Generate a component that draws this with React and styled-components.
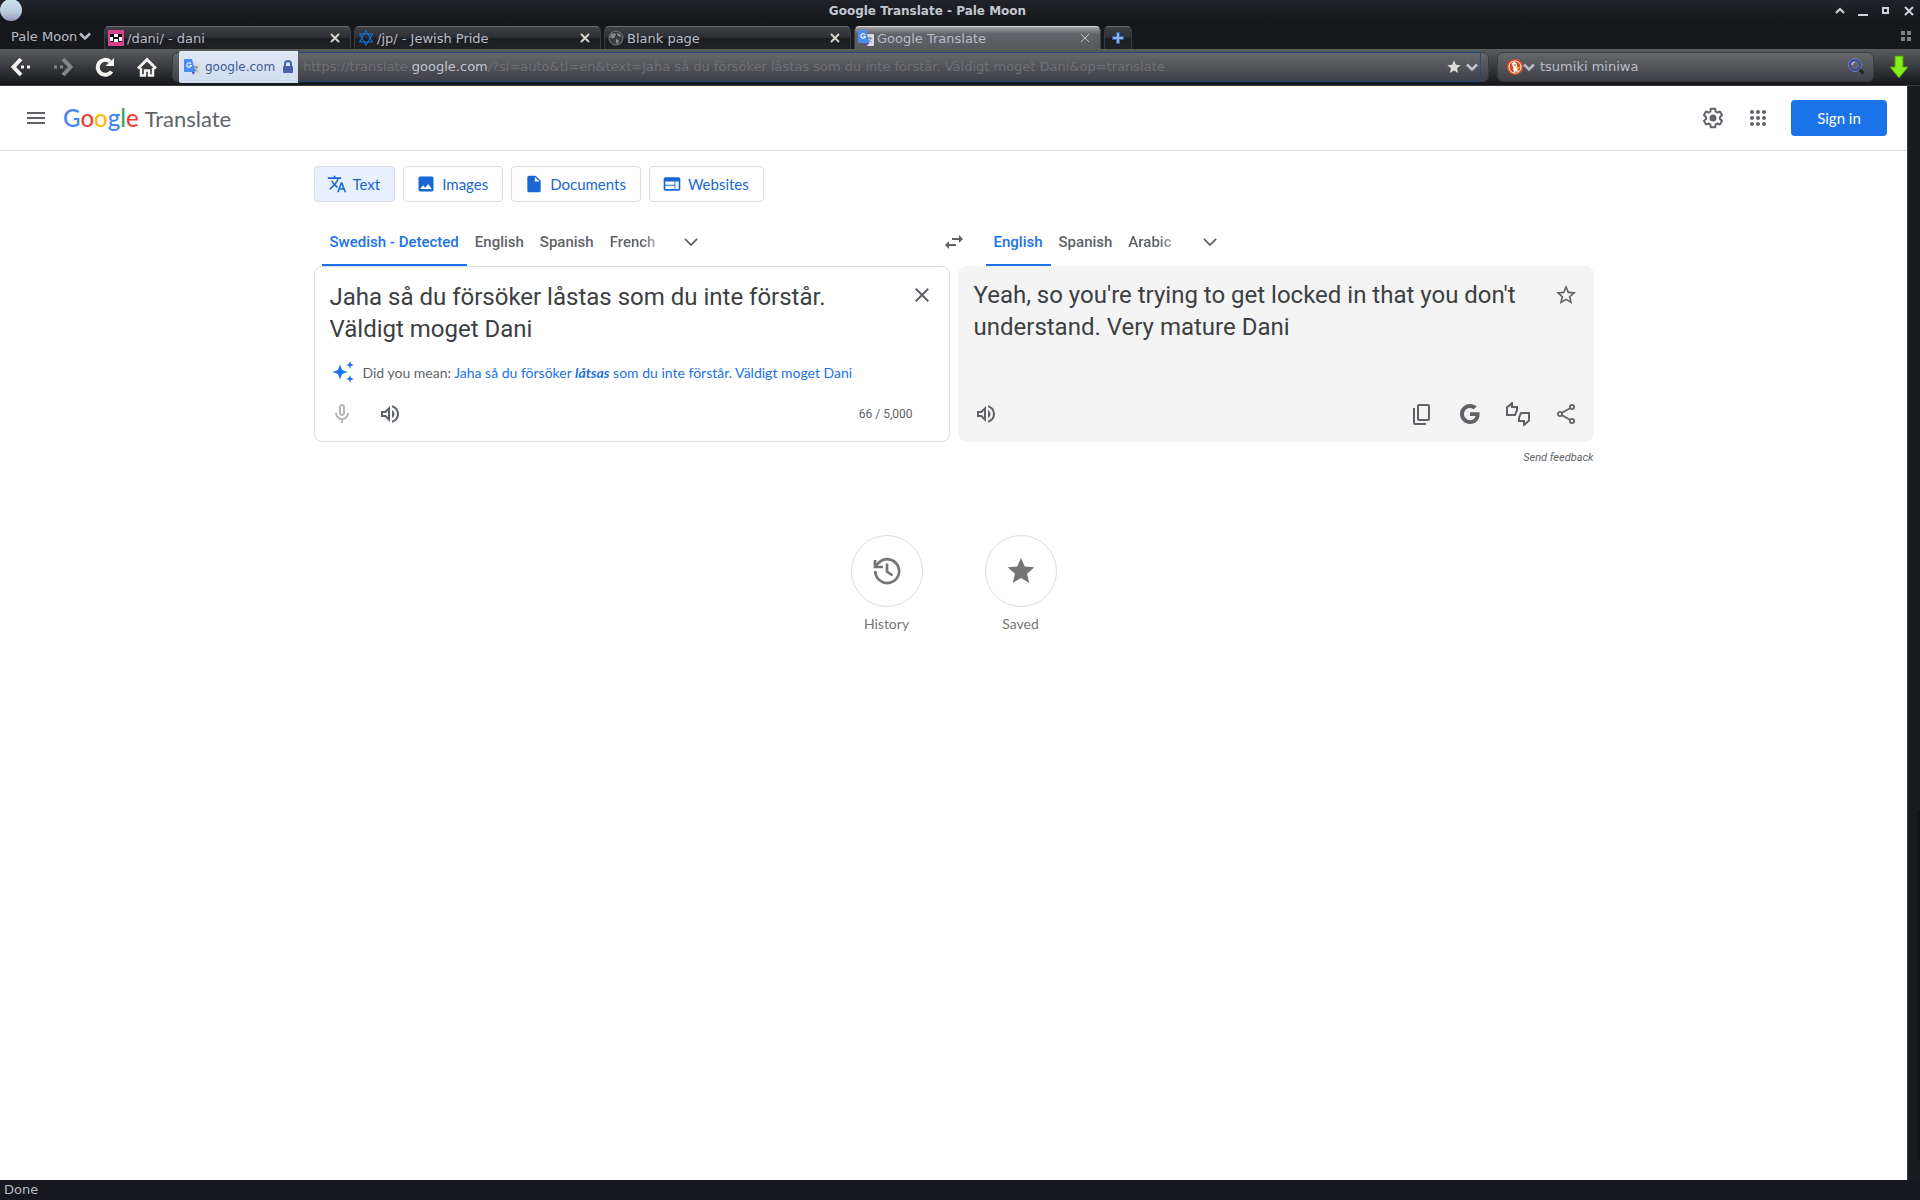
import React from 'react';
import styled, { createGlobalStyle } from 'styled-components';

const ROBOTO = 'Roboto, "Liberation Sans", sans-serif';
const BRAND = 'Lato, "Liberation Sans", sans-serif';
const CHROME = '"DejaVu Sans", sans-serif';

const GlobalStyle = createGlobalStyle`
  *, *::before, *::after { box-sizing: border-box; }
  body { margin: 0; background: #16181c; }
  button, input, textarea { font: inherit; color: inherit; margin: 0; padding: 0; border: 0; background: none; }
  button { cursor: pointer; }
  a { text-decoration: none; }
  svg { display: block; flex: none; }
`;

const Window = styled.div`
  display: flex;
  flex-direction: column;
  height: 100vh;
  font-family: ${CHROME};
  font-size: 13px;
  color: #b9bcc6;
  background: #16181c;
`;

/* ---------- window frame ---------- */
const TopFrame = styled.div`
  background: linear-gradient(#212328, #15171b 20px, #17191d);
`;
const TitleBar = styled.div`
  display: grid;
  grid-template-columns: auto 1fr auto;
  align-items: center;
  height: 22px;
  padding-right: 4px;
`;
const WindowTitle = styled.div`
  text-align: center;
  font-size: 12px;
  font-weight: 700;
  color: #c3c7d2;
`;
const WindowButtons = styled.div`
  display: flex;
  justify-content: flex-end;
  gap: 9px;
  button { width: 14px; height: 14px; color: #cfd3dc; }
`;
const TabStrip = styled.div`
  display: flex;
  align-items: flex-end;
  gap: 3px;
  height: 27px;
  padding-right: 8px;
`;
const MenuButton = styled.button`
  display: flex;
  align-items: center;
  gap: 2px;
  width: 101px;
  height: 26px;
  padding-left: 11px;
`;
const BrowserTab = styled.div`
  display: flex;
  align-items: center;
  width: 247px;
  height: 23px;
  padding: 0 8px 0 3px;
  border: 1px solid #3a3c40;
  border-top-color: ${p => (p.$active ? '#d4d5d6' : '#6a6b6e')};
  border-bottom: 0;
  border-radius: 5px 5px 0 0;
  background: ${p => (p.$active
    ? 'linear-gradient(#a0a1a4, #626368 7px, #58595d)'
    : 'linear-gradient(#404146, #2b2d31 50%, #1c1e21 50%, #1f2125)')};
  > svg { margin-right: 3px; }
`;
const TabName = styled.button`
  flex: 1;
  text-align: left;
`;
const NewTab = styled.button`
  display: flex;
  align-items: center;
  justify-content: center;
  width: 28px;
  height: 23px;
  border: 1px solid #3a3c40;
  border-top-color: #6a6b6e;
  border-bottom: 0;
  border-radius: 5px 5px 0 0;
  background: linear-gradient(#404146, #2b2d31 50%, #1c1e21 50%, #1f2125);
`;
const GridButton = styled.button`
  margin-left: auto;
  align-self: center;
`;

/* ---------- navigation bar ---------- */
const NavBar = styled.div`
  display: flex;
  align-items: center;
  height: 37px;
  padding: 0 11px 1px 0;
  border-bottom: 1px solid #35373b;
  background: linear-gradient(#5b5c60, #3c3d41 45%, #17191d 95%);
`;
const NavButton = styled.button`
  display: flex;
  align-items: center;
  justify-content: center;
  width: 42px;
  height: 34px;
  color: ${p => (p.$dim ? '#85868a' : '#f4f4f0')};
`;
const UrlBox = styled.div`
  display: flex;
  align-items: center;
  flex: 1;
  min-width: 0;
  height: 30px;
  margin-left: 4px;
  padding: 0 7px 0 6px;
  border: 1px solid #3a3b3f;
  border-radius: 6px;
  background: linear-gradient(#66676b, #3f4045);
`;
const Identity = styled.button`
  display: flex;
  align-items: center;
  gap: 5px;
  width: 119px;
  height: 32px;
  padding: 0 5px;
  border-radius: 2px 0 0 2px;
  font-size: 12px;
  color: #405b92;
  background: linear-gradient(#dfe8f5, #cfdcf0);
  span { flex: 1; text-align: left; white-space: nowrap; }
`;
const UrlField = styled.div`
  display: flex;
  align-items: center;
  flex: 1;
  min-width: 0;
  height: 30px;
  padding: 0 2px 0 5px;
  border: 1px solid #27497f;
  border-left: 0;
  white-space: nowrap;
  color: #6f7075;
  b { font-weight: 400; color: #c3c6cf; }
  button { margin-left: 4px; color: #c3c6cf; }
`;
const UrlText = styled.div`
  flex: 1;
  overflow: hidden;
`;
const SearchBox = styled.form`
  display: flex;
  align-items: center;
  flex: 0 1 377px;
  height: 30px;
  margin: 0 15px 0 8px;
  padding: 0 8px 0 9px;
  border: 1px solid #3a3b3f;
  border-radius: 6px;
  color: #babdc8;
  background: linear-gradient(#66676b, #3f4045);
  input { flex: 1; min-width: 0; padding-left: 5px; outline: 0; }
`;

/* ---------- page ---------- */
const Viewport = styled.div`
  display: flex;
  flex: 1;
  min-height: 0;
`;
const Scrollbar = styled.div`
  width: 13px;
  border-left: 1px solid #3b3d41;
  background: linear-gradient(#111318, #111318) right bottom 20px / 3px 32% no-repeat, #181b20;
`;
const Page = styled.div`
  flex: 1;
  overflow: hidden;
  background: #fff;
  font-family: ${BRAND};
  color: #5f6368;
`;
const Header = styled.header`
  display: flex;
  align-items: center;
  height: 65px;
  padding: 0 20px 0 24px;
  border-bottom: 1px solid #dfdfdf;
`;
const Logo = styled.a`
  display: flex;
  align-items: baseline;
  gap: 6px;
  margin-left: 15px;
  font-size: 22px;
  line-height: 28px;
  color: #5f6368;
`;
const GoogleMark = styled.span`
  font-size: 24px;
  font-weight: 500;
`;
const Letter = styled.span`
  color: ${p => p.$color};
`;
const HeaderTools = styled.div`
  display: flex;
  align-items: center;
  gap: 21px;
  margin-left: auto;
`;
const SignIn = styled.a`
  display: flex;
  align-items: center;
  justify-content: center;
  width: 96px;
  height: 36px;
  border-radius: 4px;
  font-size: 15px;
  color: #fff;
  background: #1a73e8;
`;
const IconButton = styled.button`
  display: flex;
  align-items: center;
  justify-content: center;
  width: 24px;
  height: 24px;
  color: ${p => p.$color || '#5f6368'};
`;
const Main = styled.main`
  max-width: 1280px;
  margin: 0 auto;
  padding-top: 15px;
`;
const Modes = styled.nav`
  display: flex;
  gap: 8px;
`;
const ModeButton = styled.button`
  display: flex;
  align-items: center;
  gap: 6px;
  height: 36px;
  padding: 0 14px 0 12px;
  border: 1px solid #dadce0;
  border-radius: 4px;
  font-size: 15px;
  color: #1967d2;
  background: ${p => (p.$active ? '#e8f0fe' : '#fff')};
`;
const LanguageBar = styled.div`
  display: grid;
  grid-template-columns: 1fr 24px 1fr;
  height: 48px;
  margin-top: 16px;
`;
const Languages = styled.div`
  display: flex;
  align-items: stretch;
  padding-left: ${p => p.$inset}px;
`;
const LanguageTab = styled.button`
  padding: 0 8px;
  border-bottom: 2px solid ${p => (p.$active ? '#1a73e8' : 'transparent')};
  border-top: 2px solid transparent;
  font-family: ${ROBOTO};
  font-size: 15px;
  font-weight: 500;
  white-space: nowrap;
  color: ${p => (p.$active ? '#1a73e8' : '#5f6368')};
  mask-image: ${p => (p.$fade ? 'linear-gradient(to right, #000 65%, transparent 110%)' : 'none')};
`;
const BarIcon = styled(IconButton)`
  align-self: center;
  margin-left: ${p => p.$gap || 0}px;
`;
const Panels = styled.div`
  display: grid;
  grid-template-columns: 1fr 1fr;
  gap: 8px;
`;
const Panel = styled.section`
  display: flex;
  flex-direction: column;
  min-height: 176px;
  padding: 12px 15px 15px;
  border: 1px solid ${p => (p.$filled ? '#f4f4f4' : '#dadce0')};
  border-radius: 8px;
  background: ${p => (p.$filled ? '#f4f4f4' : '#fff')};
`;
const TextRow = styled.div`
  display: flex;
  align-items: flex-start;
  gap: 16px;
  font-family: ${ROBOTO};
  font-size: 24px;
  line-height: 32px;
  color: #3c4043;
  textarea { flex: 1; height: 66px; padding-top: 2px; resize: none; outline: 0; overflow: hidden; }
  p { flex: 1; margin: 0; }
  button { margin-top: 4px; }
`;
const Suggestion = styled.div`
  display: flex;
  align-items: center;
  gap: 8px;
  height: 24px;
  margin: 15px 0 4px;
  padding-left: 1px;
  font-size: 14px;
  white-space: nowrap;
  a { color: #1a73e8; }
`;
const Tools = styled.div`
  display: flex;
  align-items: center;
  gap: 24px;
  margin-top: auto;
`;
const Counter = styled.span`
  margin-left: auto;
  padding-right: 21px;
  font-family: ${ROBOTO};
  font-size: 12px;
`;
const ToolGroup = styled.div`
  display: flex;
  gap: 24px;
  margin-left: auto;
`;
const Feedback = styled.a`
  display: block;
  margin-top: 9px;
  font-family: ${ROBOTO};
  font-size: 11px;
  line-height: 14px;
  font-style: italic;
  text-align: right;
  color: #5f6368;
`;
const Shortcuts = styled.div`
  display: flex;
  justify-content: center;
  gap: 62px;
  margin-top: 70px;
`;
const Shortcut = styled.button`
  display: flex;
  flex-direction: column;
  align-items: center;
  gap: 8px;
  width: 72px;
  font-size: 14px;
  line-height: 18px;
  color: #757575;
`;
const Circle = styled.span`
  display: flex;
  align-items: center;
  justify-content: center;
  width: 72px;
  height: 72px;
  border: 1px solid #dadce0;
  border-radius: 50%;
`;
const StatusBar = styled.footer`
  height: 20px;
  padding-left: 4px;
  line-height: 20px;
  background: #17181d;
`;

/* ---------- icons ---------- */
const Icon = ({ d, size = 24, ...rest }) => (
  <svg width={size} height={size} viewBox="0 0 24 24" fill="currentColor" aria-hidden="true" {...rest}><path d={d} /></svg>
);
const Stroke = ({ d, size = 14, width = 2, ...rest }) => (
  <svg width={size} height={size} viewBox="0 0 14 14" fill="none" stroke="currentColor" strokeWidth={width} aria-hidden="true" {...rest}><path d={d} /></svg>
);
const DropArrow = () => (
  <svg width="12" height="12" viewBox="0 0 12 12" fill="none" stroke="currentColor" strokeWidth="2.5" aria-hidden="true"><path d="M1 3.500l5 5 5-5" /></svg>
);
const P = {
  menu: 'M3 18h18v-2H3v2zm0-5h18v-2H3v2zm0-7v2h18V6H3z',
  apps: 'M6,8c1.1,0 2,-0.9 2,-2s-0.9,-2 -2,-2 -2,0.9 -2,2 0.9,2 2,2zM12,20c1.1,0 2,-0.9 2,-2s-0.9,-2 -2,-2 -2,0.9 -2,2 0.9,2 2,2zM6,20c1.1,0 2,-0.9 2,-2s-0.9,-2 -2,-2 -2,0.9 -2,2 0.9,2 2,2zM6,14c1.1,0 2,-0.9 2,-2s-0.9,-2 -2,-2 -2,0.9 -2,2 0.9,2 2,2zM12,14c1.1,0 2,-0.9 2,-2s-0.9,-2 -2,-2 -2,0.9 -2,2 0.9,2 2,2zM16,6c0,1.1 0.9,2 2,2s2,-0.9 2,-2 -0.9,-2 -2,-2 -2,0.9 -2,2zM12,8c1.1,0 2,-0.9 2,-2s-0.9,-2 -2,-2 -2,0.9 -2,2 0.9,2 2,2zM18,14c1.1,0 2,-0.9 2,-2s-0.9,-2 -2,-2 -2,0.9 -2,2 0.9,2 2,2zM18,20c1.1,0 2,-0.9 2,-2s-0.9,-2 -2,-2 -2,0.9 -2,2 0.9,2 2,2z',
  gear: 'M13.85 22.25h-3.7c-.74 0-1.36-.54-1.45-1.27l-.27-1.89c-.27-.14-.53-.29-.79-.46l-1.8.72c-.7.26-1.47-.03-1.81-.65L2.2 15.53c-.35-.66-.2-1.44.36-1.88l1.53-1.19c-.01-.15-.02-.3-.02-.46 0-.15.01-.31.02-.46l-1.52-1.19c-.59-.45-.74-1.26-.37-1.88l1.85-3.19c.34-.62 1.11-.9 1.79-.63l1.81.73c.26-.17.52-.32.78-.46l.27-1.91c.09-.7.71-1.25 1.44-1.25h3.7c.74 0 1.36.54 1.45 1.27l.27 1.89c.27.14.53.29.79.46l1.8-.72c.71-.26 1.48.03 1.82.65l1.84 3.18c.36.66.2 1.44-.36 1.88l-1.52 1.19c.01.15.02.3.02.46s-.01.31-.02.46l1.52 1.19c.56.45.72 1.23.37 1.86l-1.86 3.22c-.34.62-1.11.9-1.8.63l-1.8-.72c-.26.17-.52.32-.78.46l-.27 1.91c-.1.68-.72 1.22-1.46 1.22zm-3.23-2h2.76l.37-2.55.53-.22c.44-.18.88-.44 1.34-.78l.45-.34 2.38.96 1.38-2.4-2.03-1.58.07-.56c.03-.26.06-.51.06-.78s-.03-.53-.06-.78l-.07-.56 2.03-1.58-1.39-2.4-2.39.96-.45-.35c-.42-.32-.87-.58-1.33-.77l-.52-.22-.37-2.55h-2.76l-.37 2.55-.53.21c-.44.19-.88.44-1.34.79l-.45.33-2.38-.95-1.39 2.39 2.03 1.58-.07.56a7 7 0 0 0-.06.79c0 .26.02.53.06.78l.07.56-2.03 1.58 1.38 2.4 2.39-.96.45.35c.43.33.86.58 1.33.77l.53.22.38 2.55zM12 8.5a3.5 3.5 0 1 0 0 7 3.5 3.5 0 0 0 0-7z',
  translate: 'M12.87 15.07l-2.54-2.51.03-.03A17.52 17.52 0 0 0 14.07 6H17V4h-7V2H8v2H1v1.99h11.17C11.5 7.92 10.44 9.75 9 11.35 8.07 10.32 7.3 9.19 6.69 8h-2c.73 1.63 1.73 3.17 2.98 4.56l-5.09 5.02L4 19l5-5 3.11 3.11.76-2.04zM18.5 10h-2L12 22h2l1.12-3h4.75L21 22h2l-4.5-12zm-2.62 7l1.62-4.33L19.12 17h-3.24z',
  image: 'M21 19V5c0-1.1-.9-2-2-2H5c-1.1 0-2 .9-2 2v14c0 1.1.9 2 2 2h14c1.1 0 2-.9 2-2zM8.5 13.5l2.5 3.01L14.5 12l4.5 6H5l3.5-4.5z',
  doc: 'M6 2c-1.1 0-1.99.9-1.99 2L4 20c0 1.1.89 2 1.99 2H18c1.1 0 2-.9 2-2V8l-6-6H6zm7 7V3.5L18.5 9H13z',
  web: 'M20 4H4c-1.1 0-1.99.9-1.99 2L2 18c0 1.1.9 2 2 2h16c1.1 0 2-.9 2-2V6c0-1.1-.9-2-2-2zm-5 14H4v-4h11v4zm0-5H4V9h11v4zm5 5h-4V9h4v9z',
  chevron: 'M5.41 7.59L4 9l8 8 8-8-1.41-1.41L12 14.17',
  swap: 'M6.99 11L3 15l3.99 4v-3H14v-2H6.99v-3zM21 9l-3.99-4v3H10v2h7.01v3L21 9z',
  close: 'M19 6.41L17.59 5 12 10.59 6.41 5 5 6.41 10.59 12 5 17.59 6.41 19 12 13.41 17.59 19 19 17.59 13.41 12z',
  mic: 'M12 14c1.66 0 3-1.34 3-3V5c0-1.66-1.34-3-3-3S9 3.340 9 5v6c0 1.660 1.340 3 3 3zm-1-9c0-.55.45-1 1-1s1 .45 1 1v6c0 .55-.45 1-1 1s-1-.45-1-1V5zm6 6c0 2.760-2.240 5-5 5s-5-2.240-5-5H5c0 3.530 2.610 6.430 6 6.920V21h2v-3.080c3.390-.49 6-3.390 6-6.920h-2z',
  speaker: 'M3 9v6h4l5 5V4L7 9H3zm7-.17v6.340L7.830 13H5v-2h2.830L10 8.830zM16.500 12A4.500 4.500 0 0 0 14 7.970v8.050c1.480-.73 2.500-2.250 2.500-4.020zM14 3.230v2.060c2.890.86 5 3.540 5 6.710s-2.110 5.850-5 6.710v2.060c4.010-.91 7-4.490 7-8.770 0-4.280-2.990-7.860-7-8.770z',
  sparkle: 'M9 4.500l2.050 5.450L16.500 12l-5.450 2.050L9 19.500l-2.050-5.450L1.500 12l5.450-2.050zM19 1l1 2.800L22.800 5 20 6.100 19 9l-1-2.900L15.200 5 18 3.800zM19 15l1 2.800 2.800 1.200-2.800 1.100L19 23l-1-2.900-2.800-1.100 2.800-1.200z',
  star: 'M12 17.270L18.180 21l-1.640-7.030L22 9.240l-7.190-.61L12 2 9.190 8.630 2 9.240l5.460 4.730L5.820 21z',
  starOutline: 'M22 9.240l-7.190-.62L12 2 9.190 8.630 2 9.240l5.460 4.730L5.820 21 12 17.270 18.180 21l-1.630-7.030L22 9.240zM12 15.400l-3.760 2.270 1-4.280-3.320-2.880 4.380-.38L12 6.100l1.710 4.040 4.380.38-3.320 2.880 1 4.280L12 15.400z',
  google: 'M11.990 13.900v-3.720h9.360c.14.63.25 1.220.25 2.050 0 5.710-3.830 9.770-9.600 9.770-5.520 0-10-4.480-10-10S6.480 2 12 2c2.700 0 4.960.990 6.690 2.610l-2.840 2.760c-.72-.68-1.980-1.480-3.850-1.480-3.310 0-6.010 2.750-6.010 6.120s2.700 6.120 6.010 6.120c3.830 0 5.240-2.650 5.500-4.220h-5.510z',
  share: 'M18 16c-.79 0-1.500.31-2.030.81L8.910 12.700c.05-.23.09-.46.09-.7s-.04-.47-.09-.7l7.050-4.110c.53.5 1.240.81 2.040.81a3 3 0 1 0-3-3c0 .24.04.47.09.7L8.040 9.810A2.990 2.990 0 0 0 3 12a3 3 0 0 0 5.040 2.190l7.050 4.120c-.05.22-.09.45-.09.69a3 3 0 1 0 3-3zm0-12.200a1.200 1.200 0 1 1 0 2.400 1.200 1.200 0 0 1 0-2.400zM6 13.200a1.200 1.200 0 1 1 0-2.400 1.200 1.200 0 0 1 0 2.400zm12 7a1.200 1.200 0 1 1 0-2.400 1.200 1.200 0 0 1 0 2.400z',
};

const TranslateFavicon = () => (
  <svg width="16" height="16" viewBox="0 0 16 16" aria-hidden="true">
    <path d="M6 4h9a1 1 0 0 1 1 1v10a1 1 0 0 1-1 1H9z" fill="#dcdcdc" />
    <path d="M11 7v1M9 8h5M13 8c-.4 2-1.500 3-3 4M10.500 9.500c.7 1.200 1.500 2 3 2.600" stroke="#6d7f8c" fill="none" />
    <path d="M8 13h3l-2 3z" fill="#3a4fc4" />
    <path d="M1 0h7l3.500 13H1a1 1 0 0 1-1-1V1a1 1 0 0 1 1-1z" fill="#4b8bf4" />
    <path d="M7 4.600A2.300 2.300 0 1 0 7.400 6.500H5.300" stroke="#fff" strokeWidth="1.100" fill="none" />
  </svg>
);
const PixelFavicon = () => (
  <svg width="16" height="16" viewBox="0 0 16 16" aria-hidden="true">
    <rect width="16" height="16" fill="#d8418c" />
    <path d="M2 4h12v8H2z" fill="#111" />
    <path d="M6 4h4v3H6zM2 7h3v4H2zM11 7h3v4h-3zM6 9h4v3H6z" fill="#fff" />
  </svg>
);
const HexagramFavicon = () => (
  <svg width="16" height="16" viewBox="0 0 16 16" fill="none" stroke="#0b7ff0" aria-hidden="true">
    <path d="M8 .8L14.500 12H1.500zM8 15.200L1.500 4h13z" />
  </svg>
);
const GlobeFavicon = () => (
  <svg width="16" height="16" viewBox="0 0 16 16" aria-hidden="true">
    <circle cx="8" cy="8" r="7" fill="#3b3c3e" stroke="#77787a" />
    <path d="M3 4l4-1 1 2-2 3-2 .5L2 7zM9 3l3 1 1.500 3-2-.5L10 6zM8 9l3 1-1 4-2-1z" fill="#88898b" />
  </svg>
);
const TabClose = ({ label, thin }) => (
  <button aria-label={`Close ${label}`}>
    <Stroke d="M3 3l8 8M11 3l-8 8" color={thin ? '#c6c7bd' : '#d3d4c8'} width={thin ? 1 : 2} />
  </button>
);

const TABS = [
  ['/dani/ - dani', PixelFavicon],
  ['/jp/ - Jewish Pride', HexagramFavicon],
  ['Blank page', GlobeFavicon],
  ['Google Translate', TranslateFavicon],
];
const MODES = [['Text', P.translate], ['Images', P.image], ['Documents', P.doc], ['Websites', P.web]];
const GOOGLE = [['G', '#4285f4'], ['o', '#ea4335'], ['o', '#fbbc04'], ['g', '#4285f4'], ['l', '#34a853'], ['e', '#ea4335']];

export default function App() {
  return (
    <Window>
      <GlobalStyle />
      <TopFrame>
        <TitleBar>
          <svg width="22" height="22" viewBox="0 0 22 22" aria-hidden="true">
            <defs><linearGradient id="moon" x2="0" y2="1"><stop stopColor="#cfe3ee" /><stop offset=".6" stopColor="#b9c9dd" /><stop offset="1" stopColor="#9d98bd" /></linearGradient></defs>
            <circle cx="11" cy="10" r="11" fill="url(#moon)" />
          </svg>
          <WindowTitle>Google Translate - Pale Moon</WindowTitle>
          <WindowButtons>
            <button aria-label="Shade"><Stroke d="M3 9l4-4 4 4" /></button>
            <button aria-label="Minimize"><Stroke d="M2 11h10" /></button>
            <button aria-label="Maximize"><Stroke d="M4 4h5v5H4z" /></button>
            <button aria-label="Close window"><Stroke d="M3 3l8 8M11 3l-8 8" /></button>
          </WindowButtons>
        </TitleBar>
        <TabStrip>
          <MenuButton>Pale Moon<DropArrow /></MenuButton>
          {TABS.map(([name, Fav], i) => (
            <BrowserTab key={name} $active={i === 3}>
              <Fav />
              <TabName>{name}</TabName>
              <TabClose label={name} thin={i === 3} />
            </BrowserTab>
          ))}
          <NewTab aria-label="New tab">
            <svg width="12" height="12" viewBox="0 0 12 12" aria-hidden="true"><path d="M4.500.5h3v4h4v3h-4v4h-3v-4h-4v-3h4z" fill="#8db4e6" stroke="#2a62b0" /></svg>
          </NewTab>
          <GridButton aria-label="Tab groups">
            <svg width="12" height="12" viewBox="0 0 12 12" fill="#808184" aria-hidden="true"><path d="M1 1h4v4H1zM7 1h4v4H7zM1 7h4v4H1zM7 7h4v4H7z" /></svg>
          </GridButton>
        </TabStrip>
      </TopFrame>

      <NavBar>
        <NavButton aria-label="Back">
          <svg width="22" height="20" viewBox="0 0 22 20" fill="none" stroke="currentColor" strokeWidth="4" aria-hidden="true"><path d="M11 2L3.500 10l7.500 8" /><path d="M11 10h3M17 10h3" strokeWidth="3" /></svg>
        </NavButton>
        <NavButton aria-label="Forward" $dim>
          <svg width="22" height="20" viewBox="0 0 22 20" fill="none" stroke="currentColor" strokeWidth="4" aria-hidden="true"><path d="M11 2l7.500 8-7.500 8" /><path d="M2 10h3M8 10h3" strokeWidth="3" /></svg>
        </NavButton>
        <NavButton aria-label="Reload">
          <svg width="20" height="20" viewBox="0 0 20 20" fill="none" aria-hidden="true"><path d="M16.500 14.500A7.500 7.500 0 1 1 15 4.500" stroke="currentColor" strokeWidth="4" /><path d="M19 1v8h-8.500z" fill="currentColor" /></svg>
        </NavButton>
        <NavButton aria-label="Home">
          <svg width="20" height="20" viewBox="0 0 20 20" fill="none" stroke="currentColor" strokeWidth="3" aria-hidden="true"><path d="M1 11.500l9-9 9 9" /><path d="M4 11v7.500h4v-5h4v5h4V11" strokeWidth="2.500" /></svg>
        </NavButton>
        <UrlBox>
          <Identity>
            <TranslateFavicon />
            <span>google.com</span>
            <svg width="10" height="13" viewBox="0 0 10 13" aria-hidden="true"><path d="M2 7V4a3 3 0 0 1 6 0v3" fill="none" stroke="#4761ab" strokeWidth="2" /><rect y="6" width="10" height="7" rx="1" fill="#4761ab" /></svg>
          </Identity>
          <UrlField>
            <UrlText>https://translate.<b>google.com</b>/?sl=auto&amp;tl=en&amp;text=Jaha så du försöker låstas som du inte förstår. Väldigt moget Dani&amp;op=translate</UrlText>
            <button aria-label="Bookmark"><Icon d={P.star} size={16} color="#dddddb" /></button>
            <button aria-label="Show history"><DropArrow /></button>
          </UrlField>
        </UrlBox>
        <SearchBox>
          <svg width="16" height="16" viewBox="0 0 16 16" aria-hidden="true">
            <circle cx="8" cy="8" r="8" fill="#de4b22" /><circle cx="8" cy="8" r="6" fill="none" stroke="#fff" />
            <path d="M5 4c3-2 5 0 5 3l1 6H7z" fill="#fff" /><path d="M9 8l5 .5-4 1.500z" fill="#f8c518" /><path d="M8 12l3 1-2 1z" fill="#4a9b3e" /><circle cx="8" cy="6" r=".8" fill="#345" />
          </svg>
          <DropArrow />
          <input aria-label="Search" defaultValue="tsumiki miniwa" />
          <svg width="17" height="17" viewBox="0 0 17 17" aria-hidden="true"><path d="M11 11l4.500 4.500" stroke="#222" strokeWidth="3" /><circle cx="7" cy="7" r="5.500" fill="#65666c" stroke="#3346a5" strokeWidth="2" /><circle cx="7" cy="7" r="6.500" fill="none" stroke="#7f93dd" strokeWidth=".7" /><path d="M4 7a3 3 0 0 1 3-3" fill="none" stroke="#cfd6ee" /></svg>
        </SearchBox>
        <button aria-label="Downloads">
          <svg width="20" height="24" viewBox="0 0 20 24" aria-hidden="true"><path d="M6 1h8v11h5l-9 11L1 12h5z" fill="#84ee1c" stroke="#4d9c14" /></svg>
        </button>
      </NavBar>

      <Viewport>
        <Page>
          <Header>
            <IconButton aria-label="Main menu"><Icon d={P.menu} /></IconButton>
            <Logo href="#" aria-label="Google Translate">
              <GoogleMark>{GOOGLE.map(([c, color], i) => <Letter key={i} $color={color}>{c}</Letter>)}</GoogleMark>
              <span>Translate</span>
            </Logo>
            <HeaderTools>
              <IconButton aria-label="Settings"><Icon d={P.gear} /></IconButton>
              <IconButton aria-label="Google apps"><Icon d={P.apps} /></IconButton>
              <SignIn href="#">Sign in</SignIn>
            </HeaderTools>
          </Header>
          <Main>
            <Modes>
              {MODES.map(([name, d], i) => (
                <ModeButton key={name} $active={i === 0}><Icon d={d} size={20} />{name}</ModeButton>
              ))}
            </Modes>
            <LanguageBar>
              <Languages $inset={8}>
                <LanguageTab $active>Swedish - Detected</LanguageTab>
                <LanguageTab>English</LanguageTab>
                <LanguageTab>Spanish</LanguageTab>
                <LanguageTab $fade>French</LanguageTab>
                <BarIcon $gap={16} aria-label="More source languages"><Icon d={P.chevron} size={20} /></BarIcon>
              </Languages>
              <BarIcon aria-label="Swap languages"><Icon d={P.swap} /></BarIcon>
              <Languages $inset={20}>
                <LanguageTab $active>English</LanguageTab>
                <LanguageTab>Spanish</LanguageTab>
                <LanguageTab $fade>Arabic</LanguageTab>
                <BarIcon $gap={18} aria-label="More target languages"><Icon d={P.chevron} size={20} /></BarIcon>
              </Languages>
            </LanguageBar>
            <Panels>
              <Panel>
                <TextRow>
                  <textarea aria-label="Source text" defaultValue="Jaha så du försöker låstas som du inte förstår. Väldigt moget Dani" />
                  <IconButton aria-label="Clear source text"><Icon d={P.close} /></IconButton>
                </TextRow>
                <Suggestion>
                  <Icon d={P.sparkle} color="#1a73e8" />
                  <span>Did you mean: <a href="#">Jaha så du försöker <b><i>låtsas</i></b> som du inte förstår. Väldigt moget Dani</a></span>
                </Suggestion>
                <Tools>
                  <IconButton $color="#b5b6b8" aria-label="Translate by voice"><Icon d={P.mic} /></IconButton>
                  <IconButton aria-label="Listen to source text"><Icon d={P.speaker} /></IconButton>
                  <Counter>66 / 5,000</Counter>
                </Tools>
              </Panel>
              <Panel $filled>
                <TextRow>
                  <p>Yeah, so you're trying to get locked in that you don't understand. Very mature Dani</p>
                  <IconButton aria-label="Save translation"><Icon d={P.starOutline} /></IconButton>
                </TextRow>
                <Tools>
                  <IconButton aria-label="Listen to translation"><Icon d={P.speaker} /></IconButton>
                  <ToolGroup>
                    <IconButton aria-label="Copy translation">
                      <svg width="24" height="24" viewBox="0 0 24 24" fill="none" stroke="currentColor" strokeWidth="2" aria-hidden="true"><rect x="8" y="3" width="11" height="15" rx="1" /><path d="M4 6v15a1 1 0 0 0 1 1h11" /></svg>
                    </IconButton>
                    <IconButton aria-label="Search on Google"><Icon d={P.google} /></IconButton>
                    <IconButton aria-label="Rate translation">
                      <svg width="26" height="24" viewBox="0 0 26 24" fill="none" stroke="currentColor" strokeWidth="2" aria-hidden="true"><path d="M2 5.500L7 1v4h5v3l-2 5H2z" /><path d="M24 18.500L19 23v-4h-5v-3l2-5h8z" /></svg>
                    </IconButton>
                    <IconButton aria-label="Share translation"><Icon d={P.share} /></IconButton>
                  </ToolGroup>
                </Tools>
              </Panel>
            </Panels>
            <Feedback href="#">Send feedback</Feedback>
            <Shortcuts>
              <Shortcut>
                <Circle>
                  <svg width="32" height="32" viewBox="0 0 32 32" fill="none" stroke="currentColor" strokeWidth="2.700" aria-hidden="true"><path d="M4.300 16a11.900 11.900 0 1 0 3.500-8.300L4.500 11" /><path d="M4 5v7h8M16 8.500v8l5.500 4" /></svg>
                </Circle>
                History
              </Shortcut>
              <Shortcut><Circle><Icon d={P.star} size={32} /></Circle>Saved</Shortcut>
            </Shortcuts>
          </Main>
        </Page>
        <Scrollbar />
      </Viewport>
      <StatusBar>Done</StatusBar>
    </Window>
  );
}
